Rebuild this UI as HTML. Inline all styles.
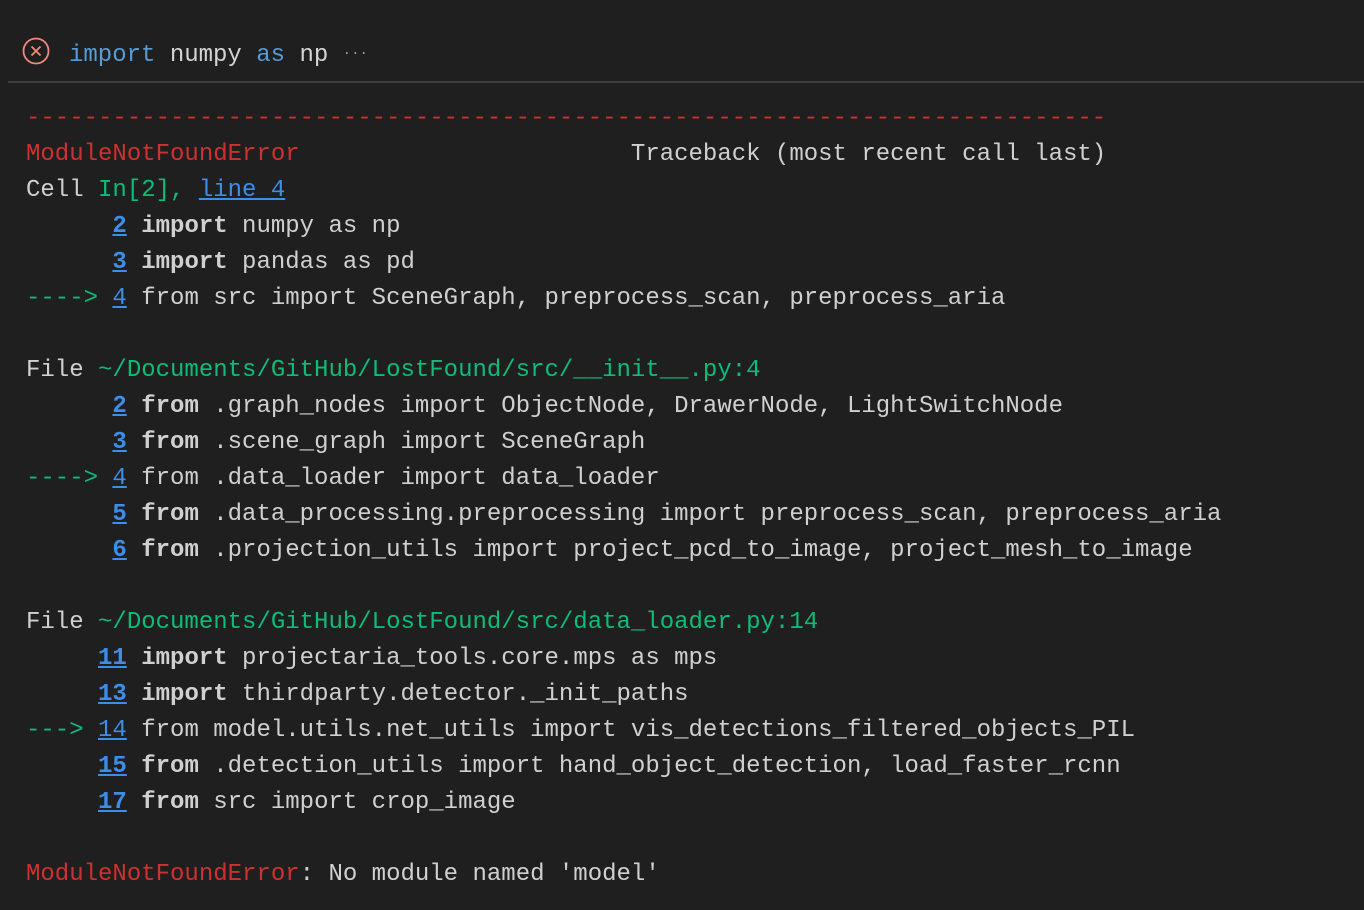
<!DOCTYPE html>
<html><head><meta charset="utf-8"><style>
html,body{margin:0;padding:0;background:#1f1f1f;width:1364px;height:910px;overflow:hidden}
.hdr{position:absolute;left:69px;top:38px;font:24px/36px "Liberation Mono",monospace;color:#d4d4d4;white-space:pre}
.kw{color:#569cd6}
.sep{position:absolute;left:8px;right:0;top:81px;height:2px;background:#3e3e3e}
pre{position:absolute;left:26px;top:101px;margin:0;font:24px/36px "Liberation Mono",monospace;color:#d0d0d0}
.r{color:#cd3131}.g{color:#0dbc79}
.l{color:#3b8eea;text-decoration:underline}
.b{font-weight:bold}
.n{color:#3b8eea;text-decoration:underline;font-weight:bold}
.dots{color:#999;font-size:14px;position:relative;top:-4px}
</style></head><body>
<svg style="position:absolute;left:22px;top:37px" width="28" height="28" viewBox="0 0 28 28"><circle cx="14" cy="14" r="12.5" fill="none" stroke="#f1897a" stroke-width="1.8"/><path d="M9.5 9.5L18.5 18.5M18.5 9.5L9.5 18.5" stroke="#f1897a" stroke-width="1.8"/></svg>
<div class="hdr"><span class="kw">import</span> numpy <span class="kw">as</span> np <span class="dots">···</span></div>
<div class="sep"></div>
<pre><span class="r">---------------------------------------------------------------------------</span>
<span class="r">ModuleNotFoundError</span>                       Traceback (most recent call last)
Cell <span class="g">In[2], </span><span class="l">line 4</span>
      <span class="n">2</span> <span class="b">import</span> numpy as np
      <span class="n">3</span> <span class="b">import</span> pandas as pd
<span class="g">----&gt; </span><span class="l">4</span> from src import SceneGraph, preprocess_scan, preprocess_aria

File <span class="g">~/Documents/GitHub/LostFound/src/__init__.py:4</span>
      <span class="n">2</span> <span class="b">from</span> .graph_nodes import ObjectNode, DrawerNode, LightSwitchNode
      <span class="n">3</span> <span class="b">from</span> .scene_graph import SceneGraph
<span class="g">----&gt; </span><span class="l">4</span> from .data_loader import data_loader
      <span class="n">5</span> <span class="b">from</span> .data_processing.preprocessing import preprocess_scan, preprocess_aria
      <span class="n">6</span> <span class="b">from</span> .projection_utils import project_pcd_to_image, project_mesh_to_image

File <span class="g">~/Documents/GitHub/LostFound/src/data_loader.py:14</span>
     <span class="n">11</span> <span class="b">import</span> projectaria_tools.core.mps as mps
     <span class="n">13</span> <span class="b">import</span> thirdparty.detector._init_paths
<span class="g">---&gt; </span><span class="l">14</span> from model.utils.net_utils import vis_detections_filtered_objects_PIL
     <span class="n">15</span> <span class="b">from</span> .detection_utils import hand_object_detection, load_faster_rcnn
     <span class="n">17</span> <span class="b">from</span> src import crop_image

<span class="r">ModuleNotFoundError</span>: No module named 'model'</pre>
</body></html>
